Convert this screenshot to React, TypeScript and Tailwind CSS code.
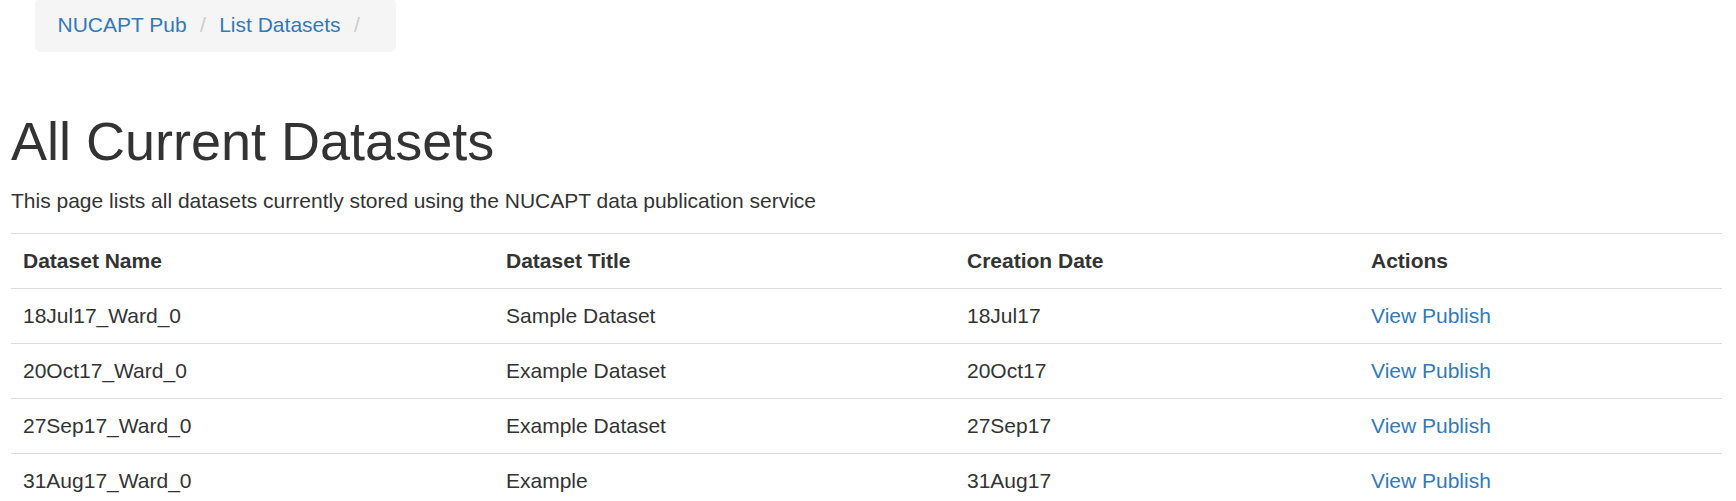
import React from "react";

const rows = [
  ["18Jul17_Ward_0", "Sample Dataset", "18Jul17"],
  ["20Oct17_Ward_0", "Example Dataset", "20Oct17"],
  ["27Sep17_Ward_0", "Example Dataset", "27Sep17"],
  ["31Aug17_Ward_0", "Example", "31Aug17"],
];

export default function App() {
  return (
    <div
      className="min-h-[501px] bg-white text-[#333] text-[21px] leading-[30px] overflow-hidden"
      style={{ fontFamily: '"Liberation Sans", Arial, sans-serif' }}
    >
      <div className="pl-[11px] pr-[14px]">
        <div className="ml-[24px] mt-[-2px] w-[361px] rounded-[6px] bg-[#f5f5f5] px-[22.5px] py-[12px] whitespace-nowrap">
          <a className="text-[#337ab7]">NUCAPT Pub</a>{" "}
          <span className="px-[7.5px] text-[#ccc]">/&nbsp;</span>
          <a className="text-[#337ab7]">List Datasets</a>{" "}
          <span className="px-[7.5px] text-[#ccc]">/&nbsp;</span>
        </div>
        <h1 className="mt-[60px] mb-[15px] text-[54px] leading-[59.4px] font-normal">
          All Current Datasets
        </h1>
        <p className="mb-[17px]">
          This page lists all datasets currently stored using the NUCAPT data publication service
        </p>
        <table className="w-full table-fixed border-collapse">
          <colgroup>
            <col className="w-[483px]" />
            <col className="w-[461px]" />
            <col className="w-[404px]" />
            <col />
          </colgroup>
          <thead>
            <tr>
              <th className="border-t border-[#ddd] p-[12px] text-left font-bold">Dataset Name</th>
              <th className="border-t border-[#ddd] p-[12px] text-left font-bold">Dataset Title</th>
              <th className="border-t border-[#ddd] p-[12px] text-left font-bold">Creation Date</th>
              <th className="border-t border-[#ddd] p-[12px] text-left font-bold">Actions</th>
            </tr>
          </thead>
          <tbody>
            {rows.map((r) => (
              <tr key={r[0]}>
                <td className="border-t border-[#ddd] p-[12px]">{r[0]}</td>
                <td className="border-t border-[#ddd] p-[12px]">{r[1]}</td>
                <td className="border-t border-[#ddd] p-[12px]">{r[2]}</td>
                <td className="border-t border-[#ddd] p-[12px]">
                  <a className="text-[#337ab7]">View Publish</a>
                </td>
              </tr>
            ))}
          </tbody>
        </table>
      </div>
    </div>
  );
}
